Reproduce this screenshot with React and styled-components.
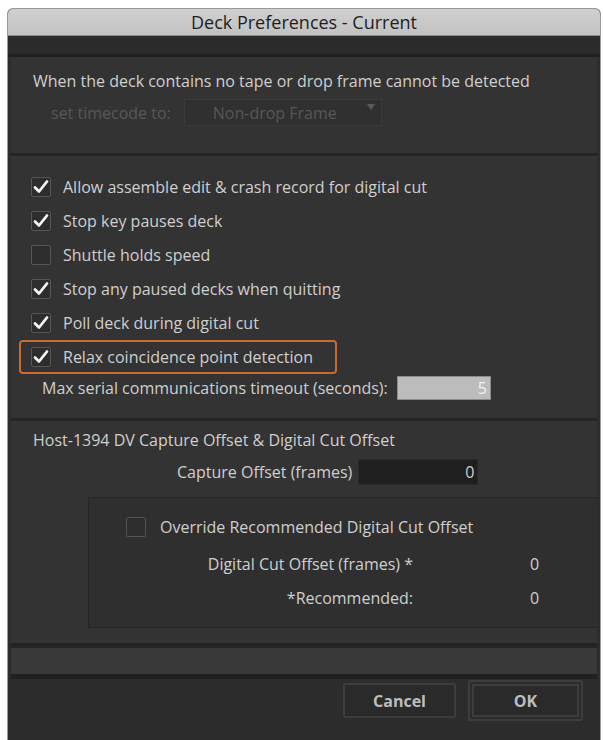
import React from "react";
import styled, { createGlobalStyle } from "styled-components";

const GlobalStyle = createGlobalStyle`
  body {
    margin: 0;
    background: #ffffff;
    font-family: "Open Sans", "Liberation Sans", sans-serif;
  }
`;

const Window = styled.div`
  margin: 8px 2px 0 7px;
  width: 594px;
  height: 732px;
  display: flex;
  flex-direction: column;
  background: #2c2c2c;
  border: 1px solid #9a9a9a;
  border-bottom: none;
  border-radius: 6px 6px 0 0;
  overflow: hidden;
  box-sizing: border-box;
`;

const TitleBar = styled.div`
  height: 26px;
  display: flex;
  align-items: center;
  justify-content: center;
  background: linear-gradient(#d0d0d0, #c2c2c2);
  border-bottom: 1px solid #8a8a8a;
  color: #1e1e1e;
  font-size: 18px;
`;

const TopStrip = styled.div`
  height: 18px;
  background: #2b2b2b;
  border-bottom: 3px solid #1f1f1f;
`;

const Panel = styled.div`
  background: #333333;
  margin: 0 3px;
  border-bottom: 3px solid #242424;
  padding: ${(p) => p.$pad || "0"};
  height: ${(p) => p.$h}px;
  box-sizing: border-box;
  display: flex;
  flex-direction: column;
`;

const Text = styled.span`
  color: ${(p) => (p.$dim ? "#575757" : "#cfcfcf")};
  font-size: 16px;
  white-space: nowrap;
`;

const TimecodeRow = styled.div`
  display: flex;
  align-items: center;
  gap: 13px;
  margin: 7px 0 0 18px;
`;

const Dropdown = styled.div`
  position: relative;
  width: 198px;
  height: 27px;
  box-sizing: border-box;
  display: flex;
  align-items: center;
  justify-content: center;
  padding-right: 16px;
  background: #303030;
  border: 1px solid #3b3b3b;
`;

const Arrow = styled.span`
  position: absolute;
  right: 6px;
  top: 4px;
  width: 0;
  height: 0;
  border-left: 4px solid transparent;
  border-right: 4px solid transparent;
  border-top: 6px solid #5a5a5a;
`;

const CheckRow = styled.div`
  display: flex;
  align-items: center;
  gap: 12px;
  height: 34px;
  width: ${(p) => (p.$hl ? "fit-content" : "auto")};
  padding: 0 22px 0 10px;
  box-sizing: border-box;
  border: 2px solid ${(p) => (p.$hl ? "#c96a2e" : "transparent")};
  border-radius: 4px;
`;

const Box = styled.span`
  width: 20px;
  height: 20px;
  box-sizing: border-box;
  border: 1px solid #555555;
  border-radius: 2px;
  background: #2d2d2d;
  display: flex;
  align-items: center;
  justify-content: center;
  flex: none;
`;

const TimeoutRow = styled.div`
  display: flex;
  align-items: center;
  gap: 9px;
  margin: 2px 0 0 23px;
`;

const Field = styled.div`
  width: ${(p) => p.$w}px;
  height: ${(p) => p.$hgt}px;
  box-sizing: border-box;
  display: flex;
  align-items: center;
  justify-content: flex-end;
  padding-right: 3px;
  background: ${(p) => (p.$light ? "#bcbcbc" : "#1f1f1f")};
  border: 1px solid ${(p) => (p.$light ? "#8c8c8c" : "#2a2a2a")};
  color: ${(p) => (p.$light ? "#f2f2f2" : "#cfcfcf")};
  font-size: 16px;
`;

const Heading = styled(Text)`
  margin: 8px 0 0 22px;
`;

const CaptureRow = styled.div`
  display: flex;
  align-items: center;
  gap: 6px;
  margin: 8px 0 0 166px;
`;

const InnerBox = styled.div`
  margin: 12px 0 0 77px;
  height: 131px;
  box-sizing: border-box;
  background: #2f2f2f;
  border: 1px solid #262626;
  border-right: none;
  display: flex;
  flex-direction: column;
`;

const OverrideRow = styled.div`
  display: flex;
  align-items: center;
  gap: 14px;
  margin: 18px 0 0 37px;
`;

const OffsetGrid = styled.div`
  display: grid;
  grid-template-columns: 324px 1fr;
  row-gap: 12px;
  margin-top: 15px;
`;

const GridLabel = styled(Text)`
  text-align: right;
`;

const GridValue = styled(Text)`
  padding-left: 117px;
`;

const Strip = styled.div`
  height: 26px;
  margin: 0 3px;
  background: #393939;
  border-top: 2px solid #262626;
  border-bottom: 5px solid #202020;
`;

const Footer = styled.div`
  flex: 1;
  background: #2c2c2c;
  display: flex;
  align-items: flex-start;
  justify-content: flex-end;
  gap: 12px;
  padding: 1px 17px 0 0;
`;

const Button = styled.div`
  width: ${(p) => (p.$focus ? 115 : 113)}px;
  height: ${(p) => (p.$focus ? 41 : 35)}px;
  margin-top: ${(p) => (p.$focus ? 0 : 3)}px;
  box-sizing: border-box;
  display: flex;
  align-items: center;
  justify-content: center;
  border: 2px solid #3d3d3d;
  box-shadow: ${(p) => (p.$focus ? "inset 0 0 0 2px #2c2c2c, inset 0 0 0 4px #3d3d3d" : "none")};
  border-radius: 2px;
  background: #2a2a2a;
  color: #bdbdbd;
  font-size: 16px;
  font-weight: 700;
`;

const Check = ({ on }) => (
  <Box>
    {on && (
      <svg width="18" height="18" viewBox="0 0 18 18">
        <path
          d="M3 9.5 L7 13.5 L15 3.5"
          fill="none"
          stroke="#f4f4f4"
          strokeWidth="2.8"
          strokeLinecap="round"
          strokeLinejoin="round"
        />
      </svg>
    )}
  </Box>
);

const options = [
  { label: "Allow assemble edit & crash record for digital cut", on: true },
  { label: "Stop key pauses deck", on: true },
  { label: "Shuttle holds speed", on: false },
  { label: "Stop any paused decks when quitting", on: true },
  { label: "Poll deck during digital cut", on: true },
  { label: "Relax coincidence point detection", on: true, hl: true },
];

const App = () => (
  <>
    <GlobalStyle />
    <Window>
      <TitleBar>Deck Preferences - Current</TitleBar>
      <TopStrip />

      <Panel $h={99} $pad="13px 0 0 22px">
        <Text>When the deck contains no tape or drop frame cannot be detected</Text>
        <TimecodeRow>
          <Text $dim>set timecode to:</Text>
          <Dropdown>
            <Text $dim>Non-drop Frame</Text>
            <Arrow />
          </Dropdown>
        </TimecodeRow>
      </Panel>

      <Panel $h={265} $pad="14px 0 0 8px">
        {options.map((o) => (
          <CheckRow key={o.label} $hl={o.hl}>
            <Check on={o.on} />
            <Text>{o.label}</Text>
          </CheckRow>
        ))}
        <TimeoutRow>
          <Text>Max serial communications timeout (seconds):</Text>
          <Field $light $w={94} $hgt={24}>5</Field>
        </TimeoutRow>
      </Panel>

      <Panel $h={225}>
        <Heading>Host-1394 DV Capture Offset &amp; Digital Cut Offset</Heading>
        <CaptureRow>
          <Text>Capture Offset (frames)</Text>
          <Field $w={120} $hgt={26}>0</Field>
        </CaptureRow>
        <InnerBox>
          <OverrideRow>
            <Check on={false} />
            <Text>Override Recommended Digital Cut Offset</Text>
          </OverrideRow>
          <OffsetGrid>
            <GridLabel>Digital Cut Offset (frames) *</GridLabel>
            <GridValue>0</GridValue>
            <GridLabel>*Recommended:</GridLabel>
            <GridValue>0</GridValue>
          </OffsetGrid>
        </InnerBox>
      </Panel>

      <Strip />

      <Footer>
        <Button>Cancel</Button>
        <Button $focus>OK</Button>
      </Footer>
    </Window>
  </>
);

export default App;
